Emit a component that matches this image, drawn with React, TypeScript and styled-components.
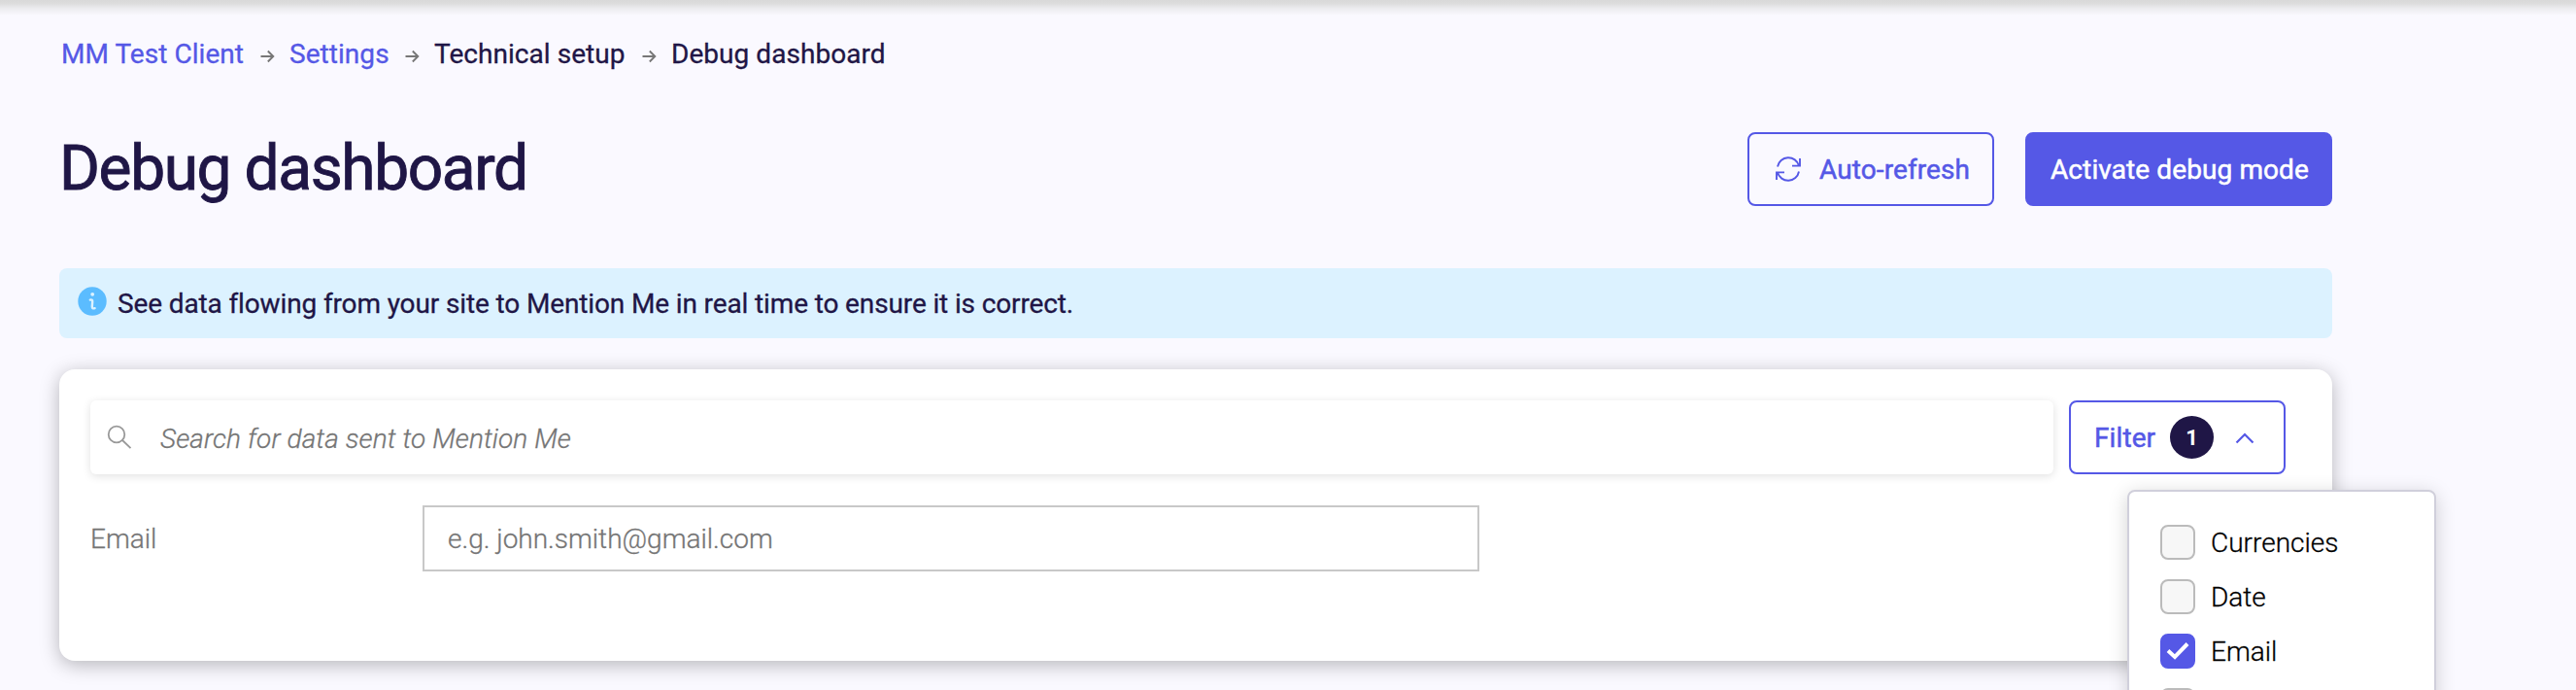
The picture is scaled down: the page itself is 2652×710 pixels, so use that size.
import React from "react";
import styled, { createGlobalStyle, css } from "styled-components";

const indigo = "#5558e6";
const navy = "#1f1646";

const GlobalStyle = createGlobalStyle`
  * { box-sizing: border-box; }
  html, body { margin: 0; padding: 0; }
  body {
    height: 710px;
    overflow: hidden;
    background: #faf9ff;
    color: ${navy};
    font-family: Roboto, "Liberation Sans", sans-serif;
    font-size: 28px;
    -webkit-font-smoothing: antialiased;
    -webkit-text-stroke-width: 0.3px;
  }
`;

const Page = styled.div`
  width: 100%;
  height: 710px;
  overflow: hidden;
`;

const TopShade = styled.div`
  height: 16px;
  background: linear-gradient(#d9d9d9 0%, #dcdcdc 20%, #ececef 55%, #faf9ff 100%);
`;

const Content = styled.main`
  width: 2340px;
  margin-left: 61px;
`;

const Breadcrumbs = styled.nav`
  display: flex;
  align-items: center;
  height: 40px;
  margin-top: 19px;
  padding-left: 2px;
  white-space: nowrap;
`;

const Crumb = styled.span<{ $link?: boolean; $width: number }>`
  width: ${(p) => p.$width}px;
  color: ${(p) => (p.$link ? indigo : navy)};
  letter-spacing: 0.05px;
`;

const CrumbArrow = styled.svg`
  width: 16px;
  height: 16px;
  margin: 5px 15px 0 15px;
  flex: none;
`;

const TitleRow = styled.header`
  display: flex;
  align-items: center;
  justify-content: space-between;
  height: 76px;
  margin-top: 61px;
`;

const Title = styled.h1`
  margin: 0;
  font-size: 64px;
  line-height: 76px;
  font-weight: 400;
  letter-spacing: -1.4px;
  -webkit-text-stroke-width: 0.9px;
`;

const Actions = styled.div`
  display: flex;
  gap: 32px;
`;

const Button = styled.button<{ $solid?: boolean; $width: number }>`
  display: flex;
  align-items: center;
  width: ${(p) => p.$width}px;
  height: 76px;
  padding: 0 24px;
  border: 2px solid ${indigo};
  border-radius: 8px;
  background: ${(p) => (p.$solid ? indigo : "transparent")};
  color: ${(p) => (p.$solid ? "#fff" : indigo)};
  font: 400 28px Roboto, sans-serif;
  letter-spacing: 0.1px;
  -webkit-text-stroke-width: 0.5px;
  white-space: nowrap;
  flex: none;
`;

const RefreshIcon = styled.svg`
  width: 28px;
  height: 28px;
  margin: 0 19px 0 1px;
  flex: none;
`;

const Alert = styled.div`
  display: flex;
  align-items: center;
  height: 72px;
  margin-top: 64px;
  padding: 0 19px;
  border-radius: 8px;
  background: #dcf2ff;
  letter-spacing: -0.13px;
  white-space: nowrap;
`;

const InfoIcon = styled.svg`
  width: 30px;
  height: 30px;
  margin: 0 11px 4px 0;
  flex: none;
`;

const Card = styled.section`
  position: relative;
  height: 300px;
  margin-top: 32px;
  padding: 32px;
  border-radius: 16px;
  background: #fff;
  box-shadow: 0 4px 20px rgba(0, 0, 0, 0.28);
`;

const SearchRow = styled.div`
  display: flex;
  gap: 16px;
`;

const SearchBox = styled.div`
  display: flex;
  align-items: center;
  width: 2021px;
  height: 76px;
  padding-left: 16px;
  border-radius: 6px;
  background: #fff;
  box-shadow: 0 2px 10px rgba(0, 0, 0, 0.12);
`;

const SearchIcon = styled.svg`
  width: 28px;
  height: 28px;
  flex: none;
`;

const fieldText = css`
  border: 0;
  outline: 0;
  background: transparent;
  font: 300 28px Roboto, sans-serif;
  color: ${navy};
`;

const SearchInput = styled.input`
  ${fieldText}
  flex: 1;
  height: 100%;
  padding: 2px 0 0 28px;
  &::placeholder {
    color: #757575;
    opacity: 1;
    font-style: italic;
    letter-spacing: 0.1px;
  }
`;

const Badge = styled.span`
  display: flex;
  align-items: center;
  justify-content: center;
  width: 45px;
  height: 44px;
  margin-left: auto;
  border-radius: 50%;
  background: ${navy};
  color: #fff;
  font-size: 22px;
  font-weight: 700;
  -webkit-text-stroke-width: 0;
`;

const Chevron = styled.svg`
  width: 22px;
  height: 14px;
  margin: 2px 5px 0 21px;
  flex: none;
`;

const FieldRow = styled.div`
  display: flex;
  align-items: center;
  height: 68px;
  margin-top: 32px;
`;

const FieldLabel = styled.label`
  width: 342px;
  color: #757575;
  font-weight: 300;
`;

const EmailInput = styled.input`
  ${fieldText}
  width: 1088px;
  height: 68px;
  padding: 1px 24px 0;
  border: 2px solid #c8c8c8;
  &::placeholder { color: #757575; opacity: 1; }
`;

const Menu = styled.div`
  position: absolute;
  top: 124px;
  left: 2129px;
  width: 318px;
  height: 260px;
  padding: 34px 32px;
  border: 2px solid #d0cfdb;
  border-radius: 8px;
  background: #fff;
  box-shadow: 0 4px 20px rgba(0, 0, 0, 0.18);
`;

const Option = styled.div`
  display: flex;
  align-items: center;
  height: 36px;
  margin-bottom: 20px;
  color: #000;
  font-weight: 300;
`;

const Checkbox = styled.span<{ $checked: boolean }>`
  display: flex;
  align-items: center;
  justify-content: center;
  width: 36px;
  height: 36px;
  margin-right: 16px;
  border: 2px solid ${(p) => (p.$checked ? indigo : "#bbb")};
  border-radius: 8px;
  background: ${(p) => (p.$checked ? indigo : "#f7f7f7")};
`;

const CheckMark = styled.svg`
  width: 24px;
  height: 20px;
  flex: none;
`;

const crumbs = [
  { text: "MM Test Client", link: true, width: 189 },
  { text: "Settings", link: true, width: 103 },
  { text: "Technical setup", width: 198 },
  { text: "Debug dashboard", width: 222 },
];

const options = [
  { label: "Currencies", checked: false },
  { label: "Date", checked: false },
  { label: "Email", checked: true },
  { label: "", checked: false },
];

export default function App() {
  return (
    <Page>
      <GlobalStyle />
      <TopShade />
      <Content>
        <Breadcrumbs>
          {crumbs.map((c, i) => (
            <React.Fragment key={c.text}>
              {i > 0 && (
                <CrumbArrow viewBox="0 0 16 16" fill="none" stroke="#777" strokeWidth="1.9">
                  <path d="M1.500 8h13M8.800 2.500 14.300 8 8.800 13.500" />
                </CrumbArrow>
              )}
              <Crumb $link={c.link} $width={c.width}>{c.text}</Crumb>
            </React.Fragment>
          ))}
        </Breadcrumbs>
        <TitleRow>
          <Title>Debug dashboard</Title>
          <Actions>
            <Button $width={254}>
              <RefreshIcon viewBox="0 0 28 28" fill="none" stroke={indigo} strokeWidth="1.900">
                <path d="M4 11.500a11.300 11.300 0 0 1 22-1M27 3v7.600h-8M26 16.500a11.300 11.300 0 0 1-22 1M3 25v-7.600h8" />
              </RefreshIcon>
              Auto-refresh
            </Button>
            <Button $solid $width={316}>Activate debug mode</Button>
          </Actions>
        </TitleRow>
        <Alert>
          <InfoIcon viewBox="0 0 30 30">
            <circle cx="15" cy="15" r="14.700" fill="#5bbcff" />
            <circle cx="15.200" cy="7.800" r="1.900" fill="#dcf2ff" />
            <path
              d="M12.800 13.600q2.600-.6 2.400 1.800l-.4 5q0 2.600 2.800 1.800"
              fill="none"
              stroke="#dcf2ff"
              strokeWidth="2.400"
              strokeLinecap="round"
            />
          </InfoIcon>
          See data flowing from your site to Mention Me in real time to ensure it is correct.
        </Alert>
        <Card>
          <SearchRow>
            <SearchBox>
              <SearchIcon viewBox="0 0 28 28" fill="none" stroke="#999" strokeWidth="1.800">
                <circle cx="11" cy="11" r="8.300" />
                <path d="m17 17 8.500 8.200" />
              </SearchIcon>
              <SearchInput placeholder="Search for data sent to Mention Me" />
            </SearchBox>
            <Button $width={223}>
              Filter
              <Badge>1</Badge>
              <Chevron viewBox="0 0 22 14" fill="none" stroke={indigo} strokeWidth="2.200">
                <path d="m2.500 11.500 8.500-8.500 8.500 8.500" />
              </Chevron>
            </Button>
          </SearchRow>
          <FieldRow>
            <FieldLabel>Email</FieldLabel>
            <EmailInput placeholder="e.g. john.smith@gmail.com" />
          </FieldRow>
          <Menu>
            {options.map((o, i) => (
              <Option key={i}>
                <Checkbox $checked={o.checked}>
                  {o.checked && (
                    <CheckMark viewBox="0 0 24 20" fill="none" stroke="#fff" strokeWidth="4">
                      <path d="m2 9.500 7 6.500L22 2.500" />
                    </CheckMark>
                  )}
                </Checkbox>
                {o.label}
              </Option>
            ))}
          </Menu>
        </Card>
      </Content>
    </Page>
  );
}
